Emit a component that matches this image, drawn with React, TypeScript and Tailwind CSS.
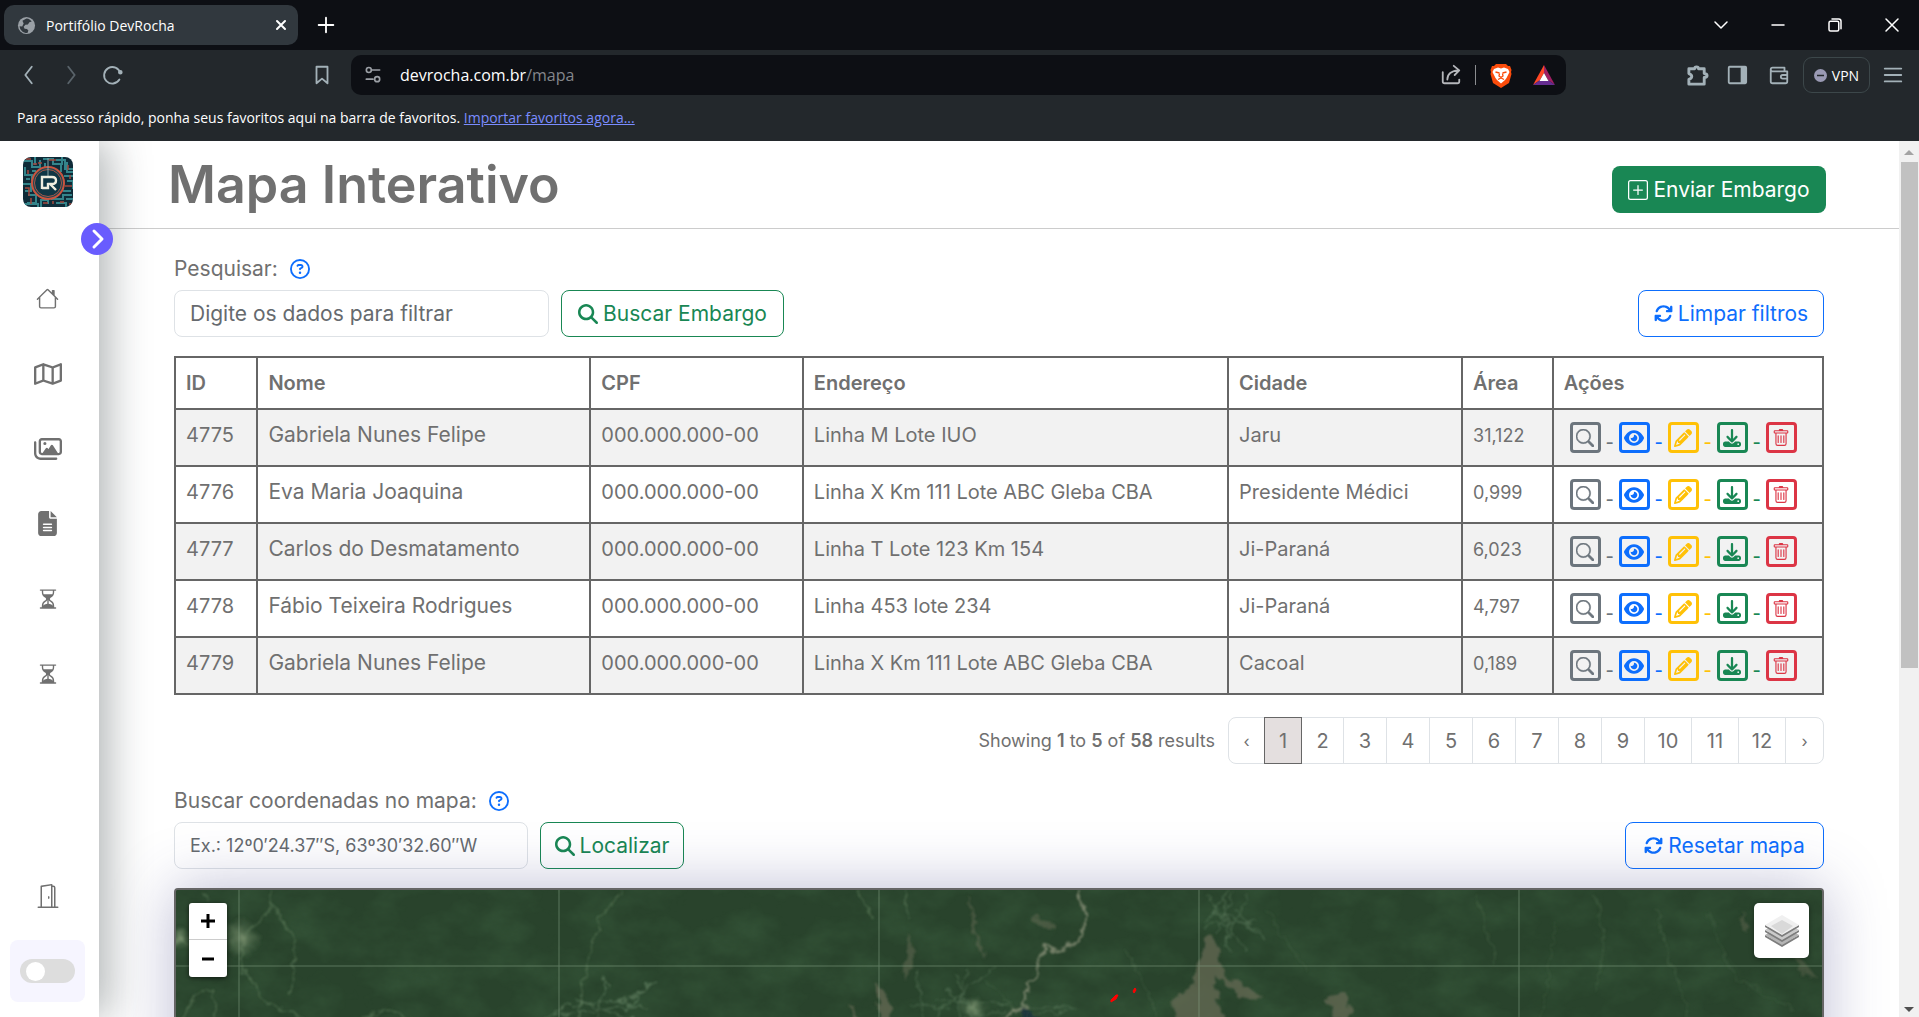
import type { ReactNode } from 'react'
import {
  BsDoorOpen,
  BsHourglassSplit,
  BsHouse,
  BsPlusSquare,
  BsSearch,
  BsTrash,
} from 'react-icons/bs'
import {
  FaArrowsRotate,
  FaDownload,
  FaEye,
  FaFileLines,
  FaMagnifyingGlass,
  FaPencil,
  FaRegCircleQuestion,
  FaRegImages,
  FaRegMap,
} from 'react-icons/fa6'

const rows = [
  { id: '4775', nome: 'Gabriela Nunes Felipe', endereco: 'Linha M Lote IUO', cidade: 'Jaru', area: '31,122' },
  { id: '4776', nome: 'Eva Maria Joaquina', endereco: 'Linha X Km 111 Lote ABC Gleba CBA', cidade: 'Presidente Médici', area: '0,999' },
  { id: '4777', nome: 'Carlos do Desmatamento', endereco: 'Linha T Lote 123 Km 154', cidade: 'Ji-Paraná', area: '6,023' },
  { id: '4778', nome: 'Fábio Teixeira Rodrigues', endereco: 'Linha 453 lote 234', cidade: 'Ji-Paraná', area: '4,797' },
  { id: '4779', nome: 'Gabriela Nunes Felipe', endereco: 'Linha X Km 111 Lote ABC Gleba CBA', cidade: 'Cacoal', area: '0,189' },
]

const actions = [
  { label: 'Localizar', icon: <BsSearch size={18} strokeWidth={0.5} />, tone: 'border-[#6c757d] text-[#6c757d]', dash: 'text-[#6c757d]' },
  { label: 'Visualizar', icon: <FaEye size={20} />, tone: 'border-[#0d6efd] text-[#0d6efd]', dash: 'text-[#0d6efd]' },
  { label: 'Editar', icon: <FaPencil size={18} />, tone: 'border-[#ffc107] text-[#ffc107]', dash: 'text-[#ffc107]' },
  { label: 'Baixar', icon: <FaDownload size={18} />, tone: 'border-[#198754] text-[#198754]', dash: 'text-[#198754]' },
  { label: 'Excluir', icon: <BsTrash size={18} />, tone: 'border-[#dc3545] text-[#dc3545]', dash: '' },
]

const pages = ['1', '2', '3', '4', '5', '6', '7', '8', '9', '10', '11', '12']

function Stroke({ children, size = 22, width = 2, className = '' }: { children: ReactNode; size?: number; width?: number; className?: string }) {
  return (
    <svg width={size} height={size} viewBox="0 0 24 24" fill="none" stroke="currentColor" strokeWidth={width} strokeLinecap="round" strokeLinejoin="round" className={className} aria-hidden="true">
      {children}
    </svg>
  )
}

function BrowserChrome() {
  return (
    <header className="shrink-0 bg-[#23282c] font-['Open_Sans',sans-serif] text-white">
      <div className="flex h-[50px] items-center bg-[#0d0f14] pl-1">
        <div className="flex h-10 w-[294px] items-center rounded-[10px] bg-[#31383e] pr-[9px] pl-[13px]">
          <svg width="19" height="19" viewBox="0 0 20 20" aria-hidden="true">
            <circle cx="10" cy="10" r="9" fill="#9aa0a6" />
            <path d="M10 2.500c2.500.3 4.300 1.400 5.500 3.200l-2.500 1-1.500 2.300-2.700.3-1.800 2 1 2.200 2.500.2 1.500 1.500-1 2.700c-4.500.2-8-3.200-8.300-7.200L5.500 11 7 8 5.700 5z" fill="#31383e" />
          </svg>
          <span className="ml-[10px] flex-1 text-[14px]">Portifólio DevRocha</span>
          <button aria-label="Fechar guia">
            <Stroke size={16} width={3}><path d="M6 6l12 12M18 6L6 18" /></Stroke>
          </button>
        </div>
        <button aria-label="Nova guia" className="ml-[17px]">
          <Stroke size={22}><path d="M12 4v16M4 12h16" /></Stroke>
        </button>
        <div className="ml-auto flex items-center pr-[18px]">
          <button aria-label="Pesquisar guias" className="w-[57px]"><Stroke size={18} width={2}><path d="M4 8l8 8 8-8" /></Stroke></button>
          <button aria-label="Minimizar" className="w-[57px]"><Stroke size={18} width={2}><path d="M4 12h16" /></Stroke></button>
          <button aria-label="Restaurar" className="w-[57px]">
            <Stroke size={18} width={2}><rect x="4" y="7" width="13" height="13" rx="2" /><path d="M8 4h9a3 3 0 0 1 3 3v10" /></Stroke>
          </button>
          <button aria-label="Fechar"><Stroke size={18} width={2}><path d="M4 4l16 16M20 4L4 20" /></Stroke></button>
        </div>
      </div>

      <div className="flex h-[50px] items-center pr-[15px] pl-[18px] text-[#a3b1b8]">
        <button aria-label="Voltar" className="w-[42px]"><Stroke size={22} width={2}><path d="M15 3l-7 9 7 9" /></Stroke></button>
        <button aria-label="Avançar" className="w-[42px] text-[#59636a]"><Stroke size={22} width={2}><path d="M9 3l7 9-7 9" /></Stroke></button>
        <button aria-label="Recarregar" className="w-[209px]">
          <Stroke size={22} width={2}><path d="M19 17a9 9 0 1 1 1-7" /><circle cx="20" cy="9" r="1.500" fill="currentColor" /></Stroke>
        </button>
        <button aria-label="Adicionar favorito" className="w-10"><Stroke size={22} width={2}><path d="M6 3h12v18l-6-5-6 5z" /></Stroke></button>
        <div className="flex h-10 w-[1215px] items-center rounded-[10px] bg-[#0d0f14] pr-2 pl-3">
          <Stroke size={20} width={2} className="text-[#9b9fa5]">
            <circle cx="7" cy="6" r="3" /><path d="M11 6h9M4 17h8" /><circle cx="17" cy="17" r="3" />
          </Stroke>
          <div className="ml-[17px] flex-1 text-[16px] text-white">devrocha.com.br<span className="text-[#84868b]">/mapa</span></div>
          <Stroke size={22} width={2} className="text-[#b5b7bb]">
            <path d="M3 9v10q0 2 2 2h14q2 0 2-2v-2M8 17q0-9 12-10M15 2l6 5-5 5" />
          </Stroke>
          <span className="mx-[13px] h-5 w-px bg-[#8b8d90]" />
          <svg width="24" height="26" viewBox="0 0 24 26" aria-label="Brave" className="mr-[19px]">
            <path d="M7 2h10l2 2 2 0 1.500 4-.5 2 .5 2-2.500 9-8 5-8-5L1.500 12 2 10l-.5-2L3 4h2z" fill="#fb4c0b" />
            <path d="M5 7l4-1.500 3 1 3-1L19 7l1.500 3-3 6-1.500 2-4 3.500L8 18l-1.500-2-3-6z" fill="#fff" />
            <path d="M6.500 10l4 1M17.500 10l-4 1M10.500 11.500l-.5 2.500 2 1.500 2-1.500-.5-2.500M9 17.500l3-1.500 3 1.500" fill="none" stroke="#fb4c0b" strokeWidth="1.300" />
          </svg>
          <svg width="24" height="22" viewBox="0 0 24 22" aria-label="BAT">
            <path d="M12 1L1 21l7-5 4-7z" fill="#ff4724" />
            <path d="M12 1l11 20-7-5-4-7z" fill="#9e1f63" />
            <path d="M1 21h22l-7-5H8z" fill="#662d91" />
            <path d="M12 9l4.500 8h-9z" fill="#fff" />
          </svg>
          <span className="w-[2px]" />
        </div>
        <div className="ml-auto flex items-center">
          <button aria-label="Extensões" className="mr-[17px]">
            <Stroke size={23} width={3}><path d="M4 5h5q0-2 2-2t2 2h6v5q3 0 3 2t-3 2v7H3v-5q3-1 3-3T3 10V5z" /></Stroke>
          </button>
          <button aria-label="Painel lateral" className="mr-[20px]">
            <Stroke size={22} width={2}><rect x="3" y="3" width="19" height="18" rx="1" /><path d="M17 4h4v16h-4z" fill="currentColor" /></Stroke>
          </button>
          <button aria-label="Carteira" className="mr-[13px]">
            <Stroke size={22} width={2}><path d="M3 6v13q0 2 2 2h14q2 0 2-2V8H5Q3 8 3 6t2-2h13v3M21 12h-5q-2 0-2 2t2 2h5" /></Stroke>
          </button>
          <button className="flex h-9 w-[67px] items-center justify-center gap-[5px] rounded-[9px] border border-[#3c474a] text-[14px] text-white">
            <svg width="13" height="13" viewBox="0 0 13 13" aria-hidden="true"><circle cx="6.500" cy="6.500" r="6.500" fill="#9a9ab4" /><path d="M3 6.500h7" stroke="#23282c" strokeWidth="1.500" /></svg>
            VPN
          </button>
          <button aria-label="Menu" className="ml-3"><Stroke size={22} width={2}><path d="M3 5h18M3 12h18M3 19h18" /></Stroke></button>
        </div>
      </div>

      <div className="h-[41px] pt-[7px] pl-[17px] text-[14px]">
        Para acesso rápido, ponha seus favoritos aqui na barra de favoritos.{' '}
        <a href="#importar" className="text-[#7a8cff] underline">Importar favoritos agora...</a>
      </div>
    </header>
  )
}

function Logo() {
  return (
    <svg width="50" height="50" viewBox="0 0 50 50" className="rounded-lg" aria-label="DevRocha">
      <rect width="50" height="50" fill="#0f2b38" />
      <g fill="none" stroke="#34848a" strokeWidth="2">
        <path d="M0 4h9v6h8V3M2 10v8h7v6M0 27h8v7H2M12 0v8M20 2h10v5h9V0M33 3h9v9h8M44 5v10h6M38 8v7M41 19h9M44 24h6v8M5 38h8v8H4M0 47h15v3M18 50v-7h7v4M28 42h12v-4h9M33 46h10v4M43 42h7M40 34h8M22 6v6M9 14h4M3 22h4" />
      </g>
      <g fill="none" stroke="#a4483c" strokeWidth="1.500">
        <path d="M3 2h5M5 13v4M2 31h4v8M15 6h4M26 3h7M45 8v5M47 18v4M37 45h4M46 47h4M8 41v6M20 46h5M42 29h7M10 7h4M30 47v-3" />
      </g>
      <circle cx="25" cy="26" r="16" fill="#1c4653" stroke="#c9543f" strokeWidth="2" />
      <circle cx="25" cy="26" r="13.500" fill="#0f3644" stroke="#a5584a" />
      <path d="M25 1v20" stroke="#8ba5a6" />
      <path d="M19 32V20h7M19 31h6v-5M26 31h-2" fill="none" stroke="#efeee0" strokeWidth="2.400" />
      <path d="M26 20h3q4 0 4 3.500T29 27h-2l6 6" fill="none" stroke="#efeee0" strokeWidth="2.400" />
    </svg>
  )
}

function Sidebar() {
  const items = [
    { label: 'Início', icon: <BsHouse size={23} /> },
    { label: 'Mapa', icon: <FaRegMap size={28} /> },
    { label: 'Imagens', icon: <FaRegImages size={28} /> },
    { label: 'Documentos', icon: <FaFileLines size={25} /> },
    { label: 'Em breve', icon: <BsHourglassSplit size={22} /> },
    { label: 'Em breve também', icon: <BsHourglassSplit size={22} /> },
  ]
  return (
    <aside className="relative z-10 flex w-[99px] shrink-0 flex-col items-center bg-white pt-4 pr-1 pb-[15px] text-[#707070] shadow-[10px_0_40px_rgba(33,45,50,0.35)]">
      <Logo />
      <button aria-label="Expandir menu" className="absolute top-[82px] left-[81px] flex size-8 items-center justify-center rounded-full bg-[#695cfe] text-white">
        <Stroke size={24} width={3}><path d="M9 4l8 8-8 8" /></Stroke>
      </button>
      <nav className="mt-[54px] flex flex-col">
        {items.map((item) => (
          <a key={item.label} href="#menu" aria-label={item.label} className="flex h-[75px] w-[75px] items-center justify-center">
            {item.icon}
          </a>
        ))}
      </nav>
      <a href="#sair" aria-label="Sair" className="mt-auto mb-[32px]"><BsDoorOpen size={24} /></a>
      <label className="flex h-[62px] w-[75px] items-center justify-center rounded-lg bg-[#f6f5ff]">
        <input type="checkbox" aria-label="Modo escuro" className="peer sr-only" />
        <span className="flex h-6 w-[55px] items-center rounded-full bg-[#ddd] pl-[6px]">
          <span className="size-[19px] rounded-full bg-white" />
        </span>
      </label>
    </aside>
  )
}

const outline = 'flex h-[47px] items-center justify-center gap-[5px] rounded-lg border text-[21px]'

function SatelliteMap() {
  return (
    <section aria-label="Mapa de satélite" className="relative mt-[19px] h-[600px] overflow-hidden rounded-[4px] border-2 border-[#666] bg-[#28422b] shadow-[0_0_60px_rgba(60,60,130,0.35)]">
      <svg className="block h-full w-full" viewBox="0 0 1646 596" preserveAspectRatio="xMidYMin slice" aria-hidden="true">
        <defs>
          <filter id="terrain" x="0" y="0" width="100%" height="100%">
            <feTurbulence type="fractalNoise" baseFrequency="0.02 0.03" numOctaves="5" seed="8" />
            <feColorMatrix values="0 0 0 0 0.08  0 0 0 0 0.2  0 0 0 0 0.09  0 2 0 0 -0.7" />
          </filter>
          <filter id="rough" x="-20%" y="-20%" width="140%" height="140%">
            <feTurbulence type="fractalNoise" baseFrequency="0.09" numOctaves="3" seed="3" result="n" />
            <feDisplacementMap in="SourceGraphic" in2="n" scale="12" xChannelSelector="R" yChannelSelector="G" />
            <feGaussianBlur stdDeviation="0.8" />
          </filter>
          <radialGradient id="town"><stop offset="0" stopColor="#8aa07c" stopOpacity=".8" /><stop offset="1" stopColor="#5f7d5b" stopOpacity="0" /></radialGradient>
        </defs>
        <rect width="1646" height="596" fill="#29432c" />
        <rect width="1646" height="596" filter="url(#terrain)" opacity=".25" />
        <g filter="url(#rough)">
          <g fill="none" stroke="#6f8d69" strokeWidth="1.500" opacity=".5">
            <path d="M97 0l-3 18-26 32-3 26 24 36 55 22 40 35" />
            <path d="M95 12l22 34 2 34-5 24M38 130v-30M184 127l30-8 40 20M5 130l15-25 18-6M28 0l5 14M2 48l12 7" />
            <path d="M446 0l-22 30-12 44-12 70M680 0l18 30M728 0l4 28" />
            <path d="M1420 5l10 50-12 50M1300 5l20 70M1480 20l25 80 10 40" opacity=".5" />
            <path d="M1090 20l40 60M1530 20l30 70 60 30M1380 30l-15 100" opacity=".35" />
            <path d="M810 90l50 48M950 60l35 70" opacity=".5" />
          </g>
          <circle cx="65" cy="48" r="20" fill="url(#town)" />
          <ellipse cx="3" cy="50" rx="15" ry="12" fill="url(#town)" />
          <g fill="none" stroke="#799877" strokeWidth="1.200" opacity=".6">
            <path d="M362 135l30-20 60-5 28-18M380 125l85-10M400 110l60 22M430 90l-12 50M450 120l22-25M425 85l10 12M390 130l50 8M440 110l30 8" />
            <path d="M1030 30l25-30M1038 45l20-40M1050 55l22-50M1035 20l50 20M1030 35l48-4M1048 10l5 55M1030 5l40 55M1060 20l28 30" opacity=".7" />
            <path d="M760 125l60-50M770 100l55 40M780 85l20 55M750 140l80-20M760 110l75 5M790 80l-8 60M850 115l50 4M850 125l40-4M740 80l12 60M735 115l38 5" opacity=".7" />
          </g>
          <g fill="#6f705b" opacity=".65">
            <path d="M1032 45l10 15 5 25 40 22-15 4-25-18-8-8 8 50-22 5-25-2-2-30 18-12 5-25z" />
            <path d="M1150 108l18-4 10 18-8 14-12-12zM700 90l12 18 6 25-8 5-10-30zM675 115l10 16-5 8z" />
            <path d="M1610 60l20 14 12 15-14-3zM1566 20l5 22-6-5z" opacity=".6" />
            <path d="M792 2l8 28 2 20 10 20-12-15zM855 25l22 8-5 8-14-7zM731 40l8 22-10 30 3-33z" opacity=".7" />
          </g>
          <path d="M902 0l7 22-2 24-10 9-19 5-10-6-7 30-13 23 2 10-36 15-8 12" fill="none" stroke="#8f947c" strokeWidth="2.500" opacity=".75" />
          <circle cx="798" cy="118" r="14" fill="url(#town)" />
          <path d="M846 118q10 2 16 12v20h-20z" fill="#1d3340" opacity=".8" />
        </g>
        <g stroke="#8ea98e" strokeWidth="1" opacity=".5">
          <path d="M63 0v596M383 0v596M703 0v596M1023 0v596M1343 0v596M0 76h1646M0 396h1646" />
        </g>
        <path d="M935 110l5-5h2l-2 4-5 3zM957 101l2-3 1 2-2 3z" fill="red" stroke="red" />
      </svg>
      <div className="absolute top-[13px] left-[13px] flex w-[38px] flex-col divide-y divide-[#ccc] overflow-hidden rounded-[3px] bg-white text-black shadow-[0_1px_5px_rgba(0,0,0,0.65)]">
        <button aria-label="Aproximar" className="flex h-[37px] items-center justify-center">
          <svg width="16" height="16" viewBox="0 0 16 16" stroke="currentColor" strokeWidth="3"><path d="M8 1v14M1 8h14" /></svg>
        </button>
        <button aria-label="Afastar" className="flex h-[37px] items-center justify-center">
          <svg width="12" height="4" viewBox="0 0 12 4" stroke="currentColor" strokeWidth="3"><path d="M0 2h12" /></svg>
        </button>
      </div>
      <button aria-label="Camadas" className="absolute top-[13px] right-[13px] flex size-[55px] items-center justify-center rounded-[5px] bg-white shadow-[0_1px_5px_rgba(0,0,0,0.4)]">
        <svg width="34" height="32" viewBox="0 0 34 32" aria-hidden="true">
          <path d="M0 20v2l17 10 17-10v-2l-17 9z" fill="#7d7d7d" />
          <path d="M0 20l17 10 17-10-5-3H5z" fill="#b4b4b4" />
          <path d="M0 15v2l17 10 17-10v-2l-17 9z" fill="#7d7d7d" />
          <path d="M0 15l17 10 17-10-5-3H5z" fill="#cacaca" />
          <path d="M0 10v2l17 10 17-10v-2l-17 9z" fill="#7d7d7d" />
          <path d="M0 10L17 0l17 10-17 10z" fill="#f0f0f0" />
          <path d="M6 11l11-6 11 6-11 8z" fill="#d9d9d9" />
        </svg>
      </button>
    </section>
  )
}

function Content() {
  return (
    <main className="min-w-0 flex-1 text-[#707070]">
      <div className="flex h-[88px] items-center justify-between border-b border-[#ccc] pr-[73px] pl-[69px]">
        <h1 className="text-[52px] leading-[78px] font-semibold">Mapa Interativo</h1>
        <button className="mt-[10px] flex h-[47px] w-[214px] items-center justify-center gap-[5px] rounded-lg bg-[#198754] text-[21px] text-white">
          <BsPlusSquare size={20} /> Enviar Embargo
        </button>
      </div>

      <div className="px-[75px] pt-[25px]">
        <div className="flex h-[30px] items-center gap-3 text-[21px]">
          <label htmlFor="pesquisar">Pesquisar:</label>
          <button aria-label="Ajuda da pesquisa" className="text-[#0d6efd]"><FaRegCircleQuestion size={20} /></button>
        </div>
        <div className="mt-[6px] flex items-center gap-3">
          <input id="pesquisar" placeholder="Digite os dados para filtrar" className="h-[47px] w-[375px] rounded-lg border border-[#dee2e6] px-[15px] text-[21px] placeholder:text-[#666a6e]" />
          <button className={`${outline} w-[223px] border-[#198754] text-[#198754]`}><FaMagnifyingGlass size={20} /> Buscar Embargo</button>
          <button className={`${outline} ml-auto w-[186px] border-[#0d6efd] text-[#0d6efd]`}><FaArrowsRotate size={19} /> Limpar filtros</button>
        </div>

        <table className="mt-[19px] w-full table-fixed border-collapse border-2 border-[#666] text-left">
          <colgroup>
            <col className="w-[5%]" />
            <col className="w-[20.2%]" />
            <col className="w-[12.9%]" />
            <col className="w-[25.8%]" />
            <col className="w-[14.2%]" />
            <col className="w-[5.5%]" />
            <col />
          </colgroup>
          <thead>
            <tr className="h-[52px] text-[20px]">
              {['ID', 'Nome', 'CPF', 'Endereço', 'Cidade', 'Área', 'Ações'].map((h) => (
                <th key={h} scope="col" className="border-2 border-[#666] px-[10px] font-semibold">{h}</th>
              ))}
            </tr>
          </thead>
          <tbody>
            {rows.map((r) => (
              <tr key={r.id} className="h-[57px] text-[20px] whitespace-nowrap odd:bg-[#f2f2f2]">
                <td className="border-2 border-[#666] px-[10px] pb-[5px]">{r.id}</td>
                <td className="border-2 border-[#666] px-[10px] pb-[5px] text-[21px]">{r.nome}</td>
                <td className="border-2 border-[#666] px-[10px] pb-[5px]">000.000.000-00</td>
                <td className="border-2 border-[#666] px-[10px] pb-[5px]">{r.endereco}</td>
                <td className="border-2 border-[#666] px-[10px] pb-[5px]">{r.cidade}</td>
                <td className="border-2 border-[#666] pb-[5px] pl-[10px] text-[18px]">{r.area}</td>
                <td className="border-2 border-[#666] pl-4">
                  <div className="flex items-center">
                    {actions.map((a) => (
                      <span key={a.label} className="flex items-end">
                        <button aria-label={`${a.label} ${r.id}`} className={`flex size-[31px] items-center justify-center rounded-[4px] border-3 ${a.tone}`}>{a.icon}</button>
                        {a.dash && <span className={`w-[18px] text-center text-[18px] leading-5 font-medium ${a.dash}`}>-</span>}
                      </span>
                    ))}
                  </div>
                </td>
              </tr>
            ))}
          </tbody>
        </table>

        <div className="mt-[22px] flex items-center justify-end gap-[13px]">
          <p className="text-[18px]">
            Showing <span className="font-semibold">1</span> to <span className="font-semibold">5</span> of <span className="font-semibold">58</span> results
          </p>
          <nav aria-label="Paginação" className="flex h-[47px] rounded-lg border border-[#dee2e6] text-[20px]">
            <button aria-label="Anterior" className="w-[35px] text-[16px]">‹</button>
            {pages.map((p, i) => (
              <button
                key={p}
                aria-current={i === 0 ? 'page' : undefined}
                className={
                  i === 0
                    ? '-my-px w-[38px] border border-[#666] bg-[#e4dfdf]'
                    : i === 1
                      ? 'w-[41px]'
                      : i < 9
                        ? 'w-[43px] border-l border-[#dee2e6]'
                        : 'w-[47px] border-l border-[#dee2e6]'
                }
              >
                {p}
              </button>
            ))}
            <button aria-label="Próxima" className="w-[38px] border-l border-[#dee2e6] text-[16px]">›</button>
          </nav>
        </div>

        <div className="mt-[22px] flex h-[30px] items-center gap-3 text-[21px]">
          <label htmlFor="coordenadas">Buscar coordenadas no mapa:</label>
          <button aria-label="Ajuda das coordenadas" className="text-[#0d6efd]"><FaRegCircleQuestion size={20} /></button>
        </div>
        <div className="mt-[6px] flex items-center gap-3">
          <input id="coordenadas" placeholder="Ex.: 12º0′24.37″S, 63º30′32.60″W" className="h-[47px] w-[354px] rounded-lg border border-[#dee2e6] px-[15px] text-[18px] placeholder:text-[#666a6e]" />
          <button className={`${outline} w-[144px] border-[#198754] text-[#198754]`}><FaMagnifyingGlass size={20} /> Localizar</button>
          <button className={`${outline} ml-auto w-[199px] border-[#0d6efd] text-[#0d6efd]`}><FaArrowsRotate size={19} /> Resetar mapa</button>
        </div>
        <SatelliteMap />
      </div>
    </main>
  )
}

function Scrollbar() {
  return (
    <div className="flex w-5 shrink-0 flex-col items-center justify-between bg-[#f1f1f1] pt-[9px] pb-[5px]" aria-hidden="true">
      <div className="flex w-full flex-1 flex-col items-center">
        <svg width="10" height="5" viewBox="0 0 10 5"><path d="M0 5l5-5 5 5z" fill="#a3a3a3" /></svg>
        <span className="mt-[7px] h-[59%] w-[17px] bg-[#c1c1c1]" />
      </div>
      <svg width="10" height="5" viewBox="0 0 10 5"><path d="M0 0l5 5 5-5z" fill="#505050" /></svg>
    </div>
  )
}

export default function App() {
  return (
    <div className="flex h-screen flex-col overflow-hidden bg-white font-['Inter',sans-serif]">
      <BrowserChrome />
      <div className="flex min-h-0 flex-1 overflow-hidden">
        <Sidebar />
        <Content />
        <Scrollbar />
      </div>
    </div>
  )
}
